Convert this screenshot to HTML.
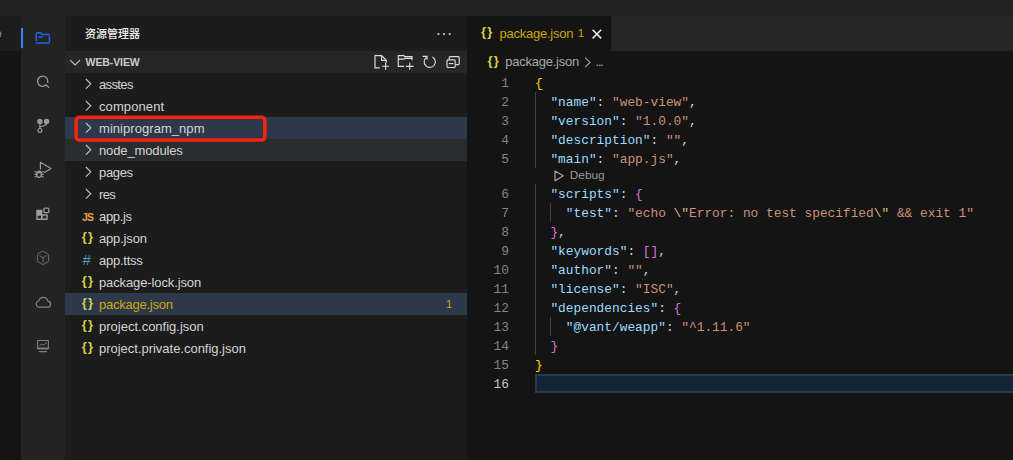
<!DOCTYPE html>
<html lang="zh-CN">
<head>
<meta charset="utf-8">
<title>package.json - web-view</title>
<style>
*{box-sizing:border-box;margin:0;padding:0}
html,body{width:1013px;height:460px;overflow:hidden;background:#141414}
body{position:relative;font-family:"Liberation Sans","Noto Sans CJK SC",sans-serif;font-size:13px;color:#d4d4d4}
.abs{position:absolute}
#topbar{left:0;top:0;width:1013px;height:16px;background:#222222}
#strip{left:0;top:16px;width:21px;height:444px;background:#141414}
#strip .top{position:absolute;left:0;top:0;width:21px;height:35px;background:#1d1d1d}
#act{left:21px;top:16px;width:44px;height:444px;background:#232323}
#side{left:65px;top:16px;width:402px;height:444px;background:#1c1c1c}
#sidehead{left:0;top:0;width:402px;height:35px}
#sidehead .title{position:absolute;left:20px;top:1px;line-height:35px;font-size:11px;font-weight:500;color:#f2f2f2}
#pane{left:0;top:35px;width:402px;height:22px;background:#262626}
#pane .name{position:absolute;left:20.6px;top:0;line-height:22px;font-size:10.5px;letter-spacing:-0.1px;font-weight:bold;color:#cccccc}
.row{position:absolute;left:0;width:402px;height:22px;line-height:22px;white-space:pre}
.row .lbl{position:absolute;left:34px;top:1px}
.row .ico{position:absolute;left:15px;top:0;width:16px;text-align:center;font-weight:bold;font-size:11px}
.row svg.chev{position:absolute;left:18px;top:3px}
#tabs{left:467px;top:16px;width:546px;height:35px;background:#262626}
#tab{left:0;top:0;width:144px;height:35px;background:#141414}
#crumbs{left:467px;top:51px;width:546px;height:22px;background:#141414}
#editor{left:467px;top:73px;width:546px;height:387px;background:#141414;font-family:"Liberation Mono","DejaVu Sans Mono",monospace;font-size:12.83px}
.ln{position:absolute;left:0;width:42px;text-align:right;height:19px;line-height:19px;color:#858585;white-space:pre}
.cl{position:absolute;left:68px;height:19px;line-height:19px;color:#d4d4d4;white-space:pre}
.jb{color:#d6d346;font-weight:bold;font-size:13px;letter-spacing:1.2px;white-space:pre}
.ln,.cl{margin-top:1px}
.k{color:#9cdcfe}.s{color:#ce9178}.e{color:#d7ba7d}.b1{color:#ffd700}.b2{color:#da70d6}
.guide{position:absolute;width:1px;background:#404040}
</style>
</head>
<body>
<div id="topbar" class="abs"></div>
<div id="strip" class="abs"><div class="top"></div></div>
<div id="act" class="abs"></div>
<svg class="abs" style="left:0;top:0" width="70" height="460" viewBox="0 0 70 460" fill="none" stroke-linecap="round" stroke-linejoin="round">
  <rect x="21" y="28" width="2" height="20" fill="#3b82f6" stroke="none"/>
  <path d="M0 31 L2.2 33.8 H1 V37 H0 Z" fill="#7a7a7a" stroke="none"/>
  <g stroke="#2563eb" stroke-width="1.5">
    <path d="M36.2 40.5 V33.8 a1 1 0 0 1 1 -1 H40.6 L42.4 34.6 H49.4"/>
    <path d="M49.4 36.6 V42.1 a1 1 0 0 1 -1 1 H36.4"/>
    <path d="M38.8 37 H42.4"/>
  </g>
  <g stroke="#9a9a9a" stroke-width="1.3">
    <path d="M45.98 85.1 A5.1 5.1 0 1 1 47.69 82.26"/>
    <path d="M46.2 85 L48.7 87.4"/>
  </g>
  <g stroke="#9a9a9a" stroke-width="1.2">
    <circle cx="39.9" cy="121.4" r="2.1" fill="#9a9a9a"/>
    <circle cx="46.6" cy="121.4" r="2.1" fill="#9a9a9a"/>
    <circle cx="39.9" cy="130.4" r="1.9"/>
    <path d="M39.9 123.5 V128.4"/>
    <path d="M46.6 123.5 C46.6 126 43 125.6 40 127"/>
  </g>
  <g stroke="#9a9a9a" stroke-width="1.2">
    <path d="M40.4 169 V162.2 L51 168.6 L44.4 172.6"/>
    <ellipse cx="39.1" cy="174.2" rx="2.3" ry="3.1"/>
    <path d="M37 172.6 H41.2" />
    <path d="M35 171.6 L36.8 172.6 M35 174.3 H36.8 M35 177 L36.8 176 M43.2 171.6 L41.4 172.6 M43.2 174.3 H41.4 M43.2 177 L41.4 176"/>
  </g>
  <g stroke="#9a9a9a" stroke-width="1.2">
    <rect x="36.3" y="209.7" width="6" height="5.4" rx="0.8" fill="#a0a0a0" stroke="none"/>
    <rect x="36.95" y="215" width="4.9" height="4.2" stroke-width="1.4"/>
    <rect x="41.85" y="215" width="5.2" height="4.2" stroke-width="1.4"/>
    <rect x="43.9" y="208.1" width="5" height="4.5" rx="1" stroke-width="1.3"/>
  </g>
  <g stroke="#6a6a6a" stroke-width="1">
    <path d="M43 251.2 L48.6 254.4 V261.4 L43 264.6 L37.4 261.4 V254.4 Z"/>
    <path d="M39.4 255.6 L43 257.8 L46.6 255.6 M43 257.8 V262"/>
  </g>
  <g stroke="#808080" stroke-width="1.2">
    <path d="M39.4 307.2 H47.4 a3 3 0 0 0 0.4 -6 a4.6 4.6 0 0 0 -9 -0.2 a3.1 3.1 0 0 0 1.2 6.2 Z"/>
  </g>
  <g stroke="#808080" stroke-width="1.1">
    <rect x="37.6" y="340.5" width="10.8" height="8.4" rx="0.6"/>
    <path d="M37.6 348.3 H48.4" stroke-width="1.6"/>
    <path d="M39.4 351.6 H46.6"/>
    <path d="M39.8 345.6 L41.6 344.2 L43.6 345 L46.4 343" stroke-width="0.9"/>
  </g>
</svg>

<div id="side" class="abs">
  <div id="sidehead" class="abs"><span class="title">资源管理器</span></div>
  <div id="pane" class="abs"><span class="name">WEB-VIEW</span></div>
  <div class="row" style="top:57px"><span class="lbl" style="letter-spacing:-0.62px">asstes</span></div>
  <div class="row" style="top:79px"><span class="lbl" style="letter-spacing:0.1px">component</span></div>
  <div class="row" style="top:101px;background:#2d384b"><span class="lbl" style="letter-spacing:0.05px">miniprogram_npm</span></div>
  <div class="row" style="top:123px;background:#2a2d2e"><span class="lbl" style="letter-spacing:-0.13px">node_modules</span></div>
  <div class="row" style="top:145px"><span class="lbl" style="letter-spacing:-0.35px">pages</span></div>
  <div class="row" style="top:167px"><span class="lbl" style="letter-spacing:-0.6px">res</span></div>
  <div class="row" style="top:189px"><span class="abs" style="left:17px;top:1px;font-weight:bold;color:#e8a33d;font-size:10.5px;letter-spacing:-0.9px">JS</span><span class="lbl" style="letter-spacing:-0.35px">app.js</span></div>
  <div class="row" style="top:211px"><span class="abs jb" style="left:16.7px;top:-1px">{}</span><span class="lbl" style="letter-spacing:-0.17px">app.json</span></div>
  <div class="row" style="top:233px"><span class="abs" style="left:17.4px;top:0;font-size:15px;color:#519aba">#</span><span class="lbl" style="letter-spacing:-0.25px">app.ttss</span></div>
  <div class="row" style="top:255px"><span class="abs jb" style="left:16.7px;top:-1px">{}</span><span class="lbl" style="letter-spacing:-0.12px">package-lock.json</span></div>
  <div class="row" style="top:277px;background:#2d384b"><span class="abs jb" style="left:16.7px;top:-1px">{}</span><span class="lbl" style="color:#cca700;letter-spacing:-0.25px">package.json</span><span class="abs" style="left:381px;top:0;color:#cca700;font-size:11px">1</span></div>
  <div class="row" style="top:299px"><span class="abs jb" style="left:16.7px;top:-1px">{}</span><span class="lbl" style="letter-spacing:0px">project.config.json</span></div>
  <div class="row" style="top:321px"><span class="abs jb" style="left:16.7px;top:-1px">{}</span><span class="lbl" style="letter-spacing:-0.02px">project.private.config.json</span></div>
  </div>
<div id="tabs" class="abs">
  <div id="tab" class="abs">
    <span class="abs jb" style="left:14px;top:-2px;line-height:35px">{}</span>
    <span class="abs" style="left:32.5px;top:0;line-height:35px;color:#cca700;white-space:pre;letter-spacing:-0.25px">package.json</span>
    <span class="abs" style="left:110.8px;top:0;line-height:35px;color:#cca700;font-size:11.5px">1</span>
  </div>
</div>
<div id="crumbs" class="abs">
  <span class="abs jb" style="left:20.5px;top:-1px;line-height:22px">{}</span>
  <span class="abs" style="left:38.3px;top:0;line-height:22px;color:#a9a9a9;white-space:pre;letter-spacing:-0.25px">package.json</span>
  <span class="abs" style="left:128.5px;top:0;line-height:22px;color:#a9a9a9;white-space:pre;letter-spacing:-1.2px">...</span>
</div>
<div id="editor" class="abs">
  <div class="guide" style="left:68px;top:19px;height:76px"></div>
  <div class="guide" style="left:68px;top:111px;height:171px"></div>
  <div class="guide" style="left:83px;top:130px;height:19px"></div>
  <div class="guide" style="left:83px;top:244px;height:19px"></div>
  <div class="abs" style="left:68px;top:301px;width:478px;height:19px;background:#152332;border:2px solid #263c4c;border-right:none"></div>
  <div class="ln" style="top:0">1</div><div class="cl" style="top:0"><span class="b1">{</span></div>
  <div class="ln" style="top:19px">2</div><div class="cl" style="top:19px">  <span class="k">"name"</span>: <span class="s">"web-view"</span>,</div>
  <div class="ln" style="top:38px">3</div><div class="cl" style="top:38px">  <span class="k">"version"</span>: <span class="s">"1.0.0"</span>,</div>
  <div class="ln" style="top:57px">4</div><div class="cl" style="top:57px">  <span class="k">"description"</span>: <span class="s">""</span>,</div>
  <div class="ln" style="top:76px">5</div><div class="cl" style="top:76px">  <span class="k">"main"</span>: <span class="s">"app.js"</span>,</div>
  <div class="abs" style="left:102.8px;top:94px;height:16px;line-height:16px;font-family:'Liberation Sans',sans-serif;font-size:11.8px;color:#999999">Debug</div>
  <div class="ln" style="top:111px">6</div><div class="cl" style="top:111px">  <span class="k">"scripts"</span>: <span class="b2">{</span></div>
  <div class="ln" style="top:130px">7</div><div class="cl" style="top:130px">    <span class="k">"test"</span>: <span class="s">"echo </span><span class="e">\"</span><span class="s">Error: no test specified</span><span class="e">\"</span><span class="s"> &amp;&amp; exit 1"</span></div>
  <div class="ln" style="top:149px">8</div><div class="cl" style="top:149px">  <span class="b2">}</span>,</div>
  <div class="ln" style="top:168px">9</div><div class="cl" style="top:168px">  <span class="k">"keywords"</span>: <span class="b2">[]</span>,</div>
  <div class="ln" style="top:187px">10</div><div class="cl" style="top:187px">  <span class="k">"author"</span>: <span class="s">""</span>,</div>
  <div class="ln" style="top:206px">11</div><div class="cl" style="top:206px">  <span class="k">"license"</span>: <span class="s">"ISC"</span>,</div>
  <div class="ln" style="top:225px">12</div><div class="cl" style="top:225px">  <span class="k">"dependencies"</span>: <span class="b2">{</span></div>
  <div class="ln" style="top:244px">13</div><div class="cl" style="top:244px">    <span class="k">"@vant/weapp"</span>: <span class="s">"^1.11.6"</span></div>
  <div class="ln" style="top:263px">14</div><div class="cl" style="top:263px">  <span class="b2">}</span></div>
  <div class="ln" style="top:282px">15</div><div class="cl" style="top:282px"><span class="b1">}</span></div>
  <div class="ln" style="top:301px;color:#c6c6c6">16</div>
</div>
<svg class="abs" style="left:0;top:0;pointer-events:none" width="1013" height="460" viewBox="0 0 1013 460" fill="none" stroke-linecap="butt" stroke-linejoin="miter">
<rect x="76.15" y="117.3" width="188.7" height="22.8" rx="3" stroke="#fd2313" stroke-width="3.5"/>
<g stroke="#c5c5c5" stroke-width="1.1">
<path d="M70.2 60.2 L75.1 65 L80 60.2"/>
<path d="M85.9 79.0 L90.8 83.8 L85.9 88.6"/>
<path d="M85.9 101.0 L90.8 105.8 L85.9 110.6"/>
<path d="M85.9 123.0 L90.8 127.8 L85.9 132.6"/>
<path d="M85.9 145.0 L90.8 149.8 L85.9 154.6"/>
<path d="M85.9 167.0 L90.8 171.8 L85.9 176.6"/>
<path d="M85.9 189.0 L90.8 193.8 L85.9 198.6"/>
</g>
<g stroke="#dcdcdc" stroke-width="1.15">
<path d="M379.8 67.9 H375 V55.6 H381.6 L386.3 60.3 V62.4 M381.6 55.6 V60.3 H386.3"/>
<path d="M385.6 62.6 V69.8 M382 66.2 H389.2"/>
<path d="M404.2 66.3 H398.3 V55.6 H403.8 L404.8 56.6 H412 V60.2 M398.3 59.1 H403.8 L404.8 58.3 H412"/>
<path d="M409.7 62.8 V69.7 M406 66.3 H413.6"/>
<path d="M426.6 57.2 A5.6 5.6 0 1 0 432.4 56.9"/>
<path d="M422.6 56.4 H427 V59.8"/>
<path d="M449.2 59.6 V57.6 a1 1 0 0 1 1 -1 H458.2 a1 1 0 0 1 1 1 V63.6 a1 1 0 0 1 -1 1 H455.6"/>
<rect x="447" y="59.9" width="8.2" height="7.6" rx="1"/>
<path d="M448.8 63.6 H453.4"/>
</g>
<g fill="#d0d0d0" stroke="none">
<rect x="437.6" y="33.2" width="1.8" height="1.8"/><rect x="443.2" y="33.2" width="1.8" height="1.8"/><rect x="448.8" y="33.2" width="1.8" height="1.8"/>
</g>
<g stroke="#f0f0f0" stroke-width="1.5">
<path d="M592.6 29.8 L601.2 38.4 M601.2 29.8 L592.6 38.4"/>
</g>
<g stroke="#a9a9a9" stroke-width="1.1">
<path d="M585.2 57.6 L590 62.4 L585.2 67.2"/>
</g>
<g stroke="#a4a4a4" stroke-width="1.2" stroke-linejoin="round">
<path d="M555 170.9 V180.7 L563.3 175.8 Z"/>
</g>
</svg>
</body>
</html>
